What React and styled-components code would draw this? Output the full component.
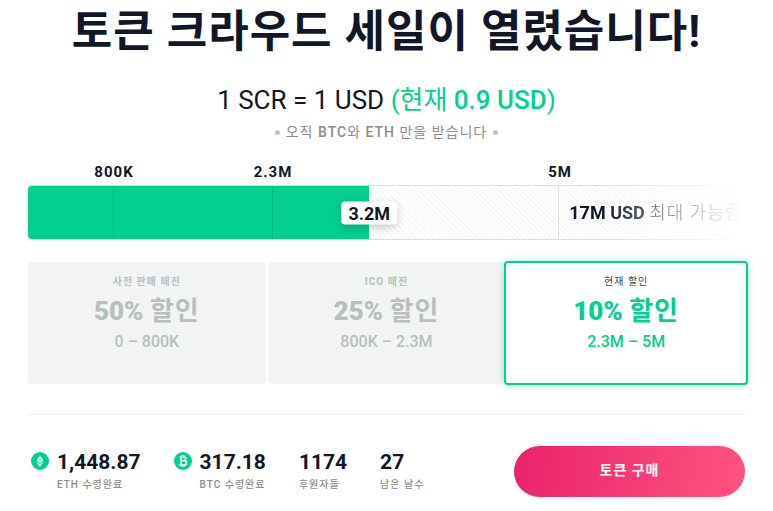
import React from "react";
import styled, { createGlobalStyle } from "styled-components";

const milestones = [
  { label: "800K", span: 86 },
  { label: "2.3M", span: 159 },
  { label: "5M", span: 287 },
];
const restSpan = 185;
const raised = { label: "3.2M", percent: 47.6 };

const tiers = [
  { note: "사전 판매 매진", discount: "50%", range: "0 – 800K" },
  { note: "ICO 매진", discount: "25%", range: "800K – 2.3M" },
  { note: "현재 할인", discount: "10%", range: "2.3M – 5M", active: true },
];

const stats = [
  { value: "1,448.87", label: "ETH 수령완료", icon: "eth" },
  { value: "317.18", label: "BTC 수령완료", icon: "btc" },
  { value: "1174", label: "후원자들" },
  { value: "27", label: "남은 날수" },
];

const EthIcon = () => (
  <svg width="18" height="18" viewBox="0 0 18 18" aria-hidden="true">
    <circle cx="9" cy="9" r="9" fill="#03d08f" />
    <path d="M9 3.2 12.5 8.9 9 10.9 5.5 8.9Z" fill="#fff" />
    <path d="M5.5 10 9 12l3.5-2L9 14.8Z" fill="#fff" />
    <path d="M9 3.6v7M6.2 8.8 9 7.5l2.8 1.3" fill="none" stroke="#03d08f" strokeWidth="0.5" />
  </svg>
);

const BtcIcon = () => (
  <svg width="18" height="18" viewBox="0 0 18 18" aria-hidden="true">
    <circle cx="9" cy="9" r="9" fill="#03d08f" />
    <path
      d="M5.4 4.9h4.4a1.9 1.9 0 0 1 0 3.9H7.1h3.2a2.1 2.1 0 0 1 0 4.2H5.4M7.1 4.9V13M8 3.2v1.7M10 3.2v1.7M8 13v1.8M10 13v1.8"
      fill="none"
      stroke="#fff"
      strokeWidth="1.5"
    />
  </svg>
);

const icons = { eth: <EthIcon />, btc: <BtcIcon /> };

const App = () => {
  return (
    <>
      <GlobalStyle />
      <Container>
        <Title>토큰 크라우드 세일이 열렸습니다!</Title>
        <Rate>
          1 SCR = 1 USD{" "}
          <em>
            <span>(현재</span> 0.9 USD<span>)</span>
          </em>
        </Rate>
        <Accepts>
          <Dot />
          <p>
            <span>오직</span> BTC<span>와</span> ETH <span>만을 받습니다</span>
          </p>
          <Dot />
        </Accepts>

        <Segments>
          {milestones.map(({ label }) => (
            <Milestone key={label}>{label}</Milestone>
          ))}
        </Segments>
        <Progress>
          <Track>
            <Fill style={{ width: `${raised.percent}%` }} />
            <Bars>
              {milestones.map(({ label }) => (
                <Segment key={label} />
              ))}
              <Cap>
                <strong>17M USD</strong> <span>최대 가능량</span>
              </Cap>
            </Bars>
          </Track>
          <Raised style={{ left: `${raised.percent}%` }}>{raised.label}</Raised>
        </Progress>

        <Tiers>
          {tiers.map(({ note, discount, range, active }) => (
            <Tier key={range} $active={active}>
              <Note $active={active}>{note}</Note>
              <Discount>
                {discount} <span>할인</span>
              </Discount>
              <Range>{range}</Range>
            </Tier>
          ))}
        </Tiers>

        <Footer>
          <Stats>
            {stats.map(({ value, label, icon }) => (
              <Stat key={label}>
                {icon && icons[icon]}
                <div>
                  <Value>{value}</Value>
                  <Label>{label}</Label>
                </div>
              </Stat>
            ))}
          </Stats>
          <BuyButton type="button">토큰 구매</BuyButton>
        </Footer>
      </Container>
    </>
  );
};

const GlobalStyle = createGlobalStyle`
  * {
    box-sizing: border-box;
  }
  body {
    margin: 0;
    background: #fff;
    color: #111726;
    font-family: Roboto, "Noto Sans CJK KR", sans-serif;
  }
  h1, h2, p {
    margin: 0;
  }
`;

const Container = styled.main`
  padding: 0 28px 14px;
`;

const Title = styled.h1`
  padding-top: 2px;
  font-size: 44px;
  line-height: 60px;
  font-weight: 700;
  letter-spacing: 1px;
  text-align: center;
  white-space: nowrap;
`;

const Rate = styled.h2`
  margin-top: 18px;
  font-size: 26px;
  line-height: 40px;
  font-weight: 400;
  text-align: center;
  em {
    color: #03d08f;
    font-style: normal;
    font-weight: 500;
  }
  span {
    font-weight: 400;
  }
`;

const Accepts = styled.div`
  display: flex;
  align-items: center;
  justify-content: center;
  gap: 6px;
  color: #8c8c8c;
  font-size: 14px;
  line-height: 24px;
  font-weight: 500;
  letter-spacing: 1px;
  span {
    font-weight: 400;
  }
`;

const Dot = styled.i`
  width: 5px;
  height: 5px;
  border-radius: 50%;
  background: #c4c4c4;
`;

const Segments = styled.div`
  display: grid;
  grid-template-columns: ${milestones.map(({ span }) => `${span}fr`).join(" ")} ${restSpan}fr;
`;

const Milestone = styled.span`
  justify-self: end;
  transform: translateX(50%);
  margin-top: 16px;
  font-size: 15px;
  line-height: 25px;
  font-weight: 700;
  letter-spacing: 1px;
`;

const Progress = styled.div`
  position: relative;
`;

const Track = styled.div`
  position: relative;
  height: 55px;
  overflow: hidden;
  border: 1px solid #dedede;
  border-left: 0;
  border-radius: 4px;
  background: repeating-linear-gradient(45deg, #fff 0 2px, #f8f8f8 2px 4px);
  mask-image: linear-gradient(to right, #000 80%, transparent 100%);
`;

const Fill = styled.div`
  position: absolute;
  top: -1px;
  bottom: -1px;
  left: 0;
  background: #03d08f;
`;

const Bars = styled(Segments)`
  position: relative;
  height: 100%;
`;

const Segment = styled.div`
  border-right: 1px solid rgba(0, 0, 0, 0.1);
`;

const Cap = styled.p`
  padding-left: 10px;
  font-size: 18px;
  line-height: 53px;
  font-weight: 200;
  white-space: nowrap;
  strong {
    font-weight: 700;
  }
  span {
    letter-spacing: 1px;
  }
`;

const Raised = styled.div`
  position: absolute;
  top: 50%;
  transform: translate(-50%, -50%);
  padding: 0 7px;
  border-radius: 4px;
  background: #fff;
  box-shadow: 0 3px 8px rgba(0, 0, 0, 0.2);
  font-size: 18px;
  line-height: 23px;
  font-weight: 700;
`;

const Tiers = styled.section`
  display: grid;
  grid-template-columns: repeat(3, 1fr);
  gap: 2px;
  margin-top: 22px;
`;

const Tier = styled.article`
  margin: ${({ $active }) => ($active ? "-1px -3px" : "0")};
  padding: ${({ $active }) => ($active ? "8px 0 29px" : "9px 0 30px")};
  border: ${({ $active }) => ($active ? "2px solid #03d08f" : "0")};
  border-radius: 4px;
  text-align: center;
  color: ${({ $active }) => ($active ? "#03d08f" : "#b9bfbd")};
  background: ${({ $active }) => ($active ? "#fff" : "#f2f4f4")};
  box-shadow: ${({ $active }) => ($active ? "0 0 7px rgba(3, 208, 143, 0.4)" : "none")};
`;

const Note = styled.p`
  color: ${({ $active }) => ($active ? "#444" : "inherit")};
  font-size: 10px;
  line-height: 21px;
  font-weight: ${({ $active }) => ($active ? 400 : 700)};
  letter-spacing: 1px;
`;

const Discount = styled.h2`
  font-size: 26px;
  line-height: 38px;
  font-weight: 900;
  span {
    font-weight: 700;
    letter-spacing: 1px;
  }
`;

const Range = styled.p`
  font-size: 16px;
  line-height: 24px;
  font-weight: 500;
`;

const Footer = styled.footer`
  display: flex;
  align-items: flex-start;
  justify-content: space-between;
  margin-top: 30px;
  padding-top: 31px;
  border-top: 1px solid #eee;
`;

const Stats = styled.div`
  display: flex;
  gap: 33px;
  padding: 1px 0 0 3px;
`;

const Stat = styled.div`
  display: flex;
  gap: 8px;
  svg {
    margin-top: 5px;
  }
`;

const Value = styled.p`
  font-size: 21px;
  line-height: 30px;
  font-weight: 700;
`;

const Label = styled.p`
  color: #8c8c8c;
  font-size: 10px;
  line-height: 16px;
  font-weight: 500;
  letter-spacing: 1px;
`;

const BuyButton = styled.button`
  width: 231px;
  height: 51px;
  padding: 0 0 6px;
  border: 0;
  border-radius: 26px;
  background: linear-gradient(100deg, #ea226b, #ff5480);
  color: #fff;
  font-family: inherit;
  font-size: 14px;
  font-weight: 700;
  letter-spacing: 1px;
  cursor: pointer;
`;

export default App;
